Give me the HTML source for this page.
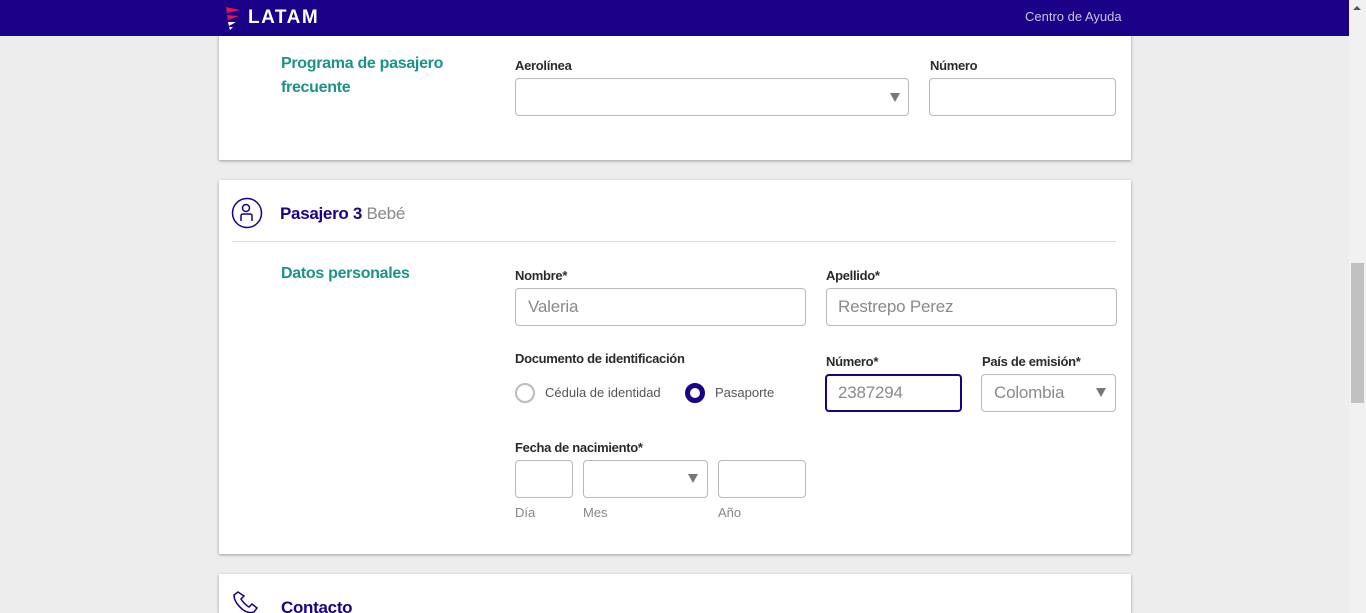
<!DOCTYPE html>
<html><head><meta charset="utf-8"><style>
*{box-sizing:border-box;margin:0;padding:0}
html,body{width:1366px;height:613px;overflow:hidden}
body{background:#ededed;font-family:"Liberation Sans",sans-serif;position:relative}
.a{position:absolute}
.hdr{left:0;top:0;width:1349px;height:36px;background:#1b0088;z-index:5}
.z{z-index:6}
.sb{left:1349px;top:0;width:17px;height:613px;background:#f1f1f1;z-index:5}
.thumb{left:1351px;top:263px;width:13px;height:140px;background:#c1c1c1;z-index:6}
.card{background:#fff;box-shadow:0 1px 3px rgba(0,0,0,.35)}
.lbl{font-size:13px;font-weight:bold;color:#2b2b2b;letter-spacing:-.3px}
.inp{border:1px solid #b8b8b8;border-radius:4px;background:#fff}
.ph{font-size:17px;color:#8a8a8a;letter-spacing:-.2px}
.sec{font-size:16px;font-weight:bold;color:#1b9388;line-height:24px;letter-spacing:-.3px}
.tri{width:0;height:0;border-left:5px solid transparent;border-right:5px solid transparent;border-top:9px solid #777}
.sm{font-size:13px;color:#888}
</style></head><body>
<div class="a hdr"></div>
<svg class="a z" style="left:224px;top:6px" width="18" height="24" viewBox="0 0 18 24"><path d="M2 1 L16 4 L3 7 Z" fill="#e8114b"/><path d="M3 9 L15 10 L4 14 Z" fill="#e8114b"/><path d="M4 16 L12 16 L5 20 Z" fill="#fff"/><path d="M5 21 L9 21 L6 24Z" fill="#fff"/></svg>
<div class="a z" style="left:248px;top:7px;color:#fff;font-weight:bold;font-size:19px;letter-spacing:1.5px">LATAM</div>
<div class="a z" style="left:1025px;top:9px;color:#c9c4e6;font-size:13px">Centro de Ayuda</div>
<div class="a sb"></div><div class="a thumb"></div>
<div class="a z" style="left:1353px;top:6px;width:0;height:0;border-left:4px solid transparent;border-right:4px solid transparent;border-bottom:4px solid #555"></div>

<div class="a card" style="left:219px;top:20px;width:912px;height:140px"></div>
<div class="a sec" style="left:281px;top:52px">Programa de pasajero<br>frecuente</div>
<div class="a lbl" style="left:515px;top:58px">Aerolínea</div>
<div class="a inp" style="left:515px;top:78px;width:394px;height:38px"></div>
<div class="a tri" style="left:890px;top:93px"></div>
<div class="a lbl" style="left:930px;top:58px">Número</div>
<div class="a inp" style="left:929px;top:78px;width:187px;height:38px"></div>

<div class="a card" style="left:219px;top:180px;width:912px;height:374px"></div>
<svg class="a" style="left:231px;top:197px" width="32" height="32" viewBox="0 0 32 32" fill="none" stroke="#1b0088" stroke-width="1.5"><circle cx="16" cy="16" r="14.5"/><circle cx="15" cy="11" r="3.5"/><path d="M10 24 V19 Q10 17 12 17 H19 Q21 17 21 19 V24"/></svg>
<div class="a" style="left:280px;top:204px;font-size:17px;font-weight:bold;color:#1b0088;letter-spacing:-.3px">Pasajero 3 <span style="font-weight:normal;color:#888">Bebé</span></div>
<div class="a" style="left:232px;top:241px;width:884px;height:1px;background:#ddd"></div>
<div class="a sec" style="left:281px;top:262px">Datos personales</div>
<div class="a lbl" style="left:515px;top:268px">Nombre*</div>
<div class="a inp" style="left:515px;top:288px;width:291px;height:38px"></div>
<div class="a ph" style="left:528px;top:297px">Valeria</div>
<div class="a lbl" style="left:826px;top:268px">Apellido*</div>
<div class="a inp" style="left:826px;top:288px;width:291px;height:38px"></div>
<div class="a ph" style="left:838px;top:297px">Restrepo Perez</div>
<div class="a lbl" style="left:515px;top:351px">Documento de identificación</div>
<div class="a" style="left:515px;top:383px;width:20px;height:20px;border:2px solid #bbb;border-radius:50%"></div>
<div class="a sm" style="left:545px;top:385px;color:#555">Cédula de identidad</div>
<div class="a" style="left:685px;top:383px;width:20px;height:20px;border:5px solid #1b0088;border-radius:50%"></div>
<div class="a sm" style="left:715px;top:385px;color:#555">Pasaporte</div>
<div class="a lbl" style="left:826px;top:354px">Número*</div>
<div class="a" style="left:825px;top:374px;width:137px;height:38px;border:2px solid #1b0088;border-radius:4px"></div>
<div class="a ph" style="left:838px;top:383px">2387294</div>
<div class="a lbl" style="left:982px;top:354px">País de emisión*</div>
<div class="a inp" style="left:981px;top:374px;width:135px;height:38px"></div>
<div class="a ph" style="left:994px;top:383px">Colombia</div>
<div class="a tri" style="left:1096px;top:388px"></div>
<div class="a lbl" style="left:515px;top:440px">Fecha de nacimiento*</div>
<div class="a inp" style="left:515px;top:460px;width:58px;height:38px"></div>
<div class="a inp" style="left:583px;top:460px;width:125px;height:38px"></div>
<div class="a tri" style="left:688px;top:474px"></div>
<div class="a inp" style="left:718px;top:460px;width:88px;height:38px"></div>
<div class="a sm" style="left:515px;top:505px">Día</div>
<div class="a sm" style="left:583px;top:505px">Mes</div>
<div class="a sm" style="left:718px;top:505px">Año</div>

<div class="a card" style="left:219px;top:574px;width:912px;height:39px"></div>
<svg class="a" style="left:232px;top:590px" width="28" height="23" viewBox="0 0 28 23" fill="none" stroke="#1b0088" stroke-width="1.5"><path d="M6 2 L2 5 Q2 12 10 19 Q16 24 22 22 L25 18 L20 14 L17 17 Q12 14 9 9 L12 6 Z"/></svg>
<div class="a" style="left:281px;top:598px;font-size:17px;font-weight:bold;color:#1b0088;letter-spacing:-.3px">Contacto</div>
</body></html>
